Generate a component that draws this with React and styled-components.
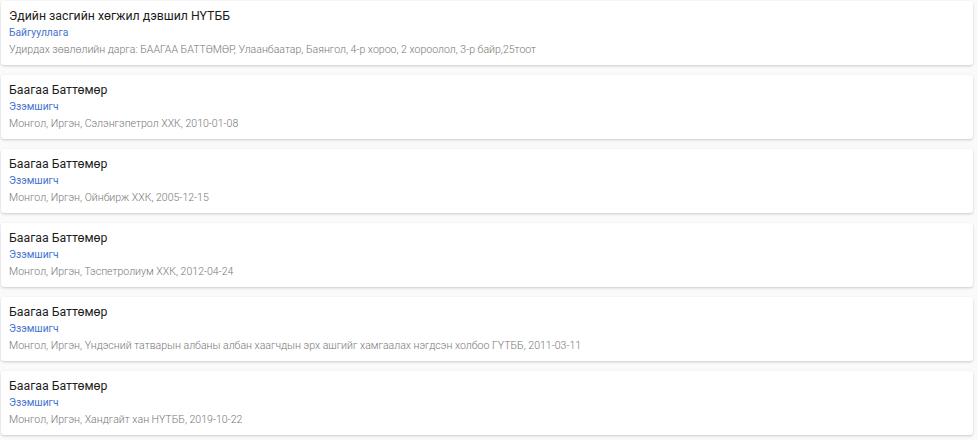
import React from 'react';
import styled, { createGlobalStyle } from 'styled-components';

const GlobalStyle = createGlobalStyle`
  body {
    margin: 0;
    background: #fafafa;
    font-family: Roboto, "Liberation Sans", sans-serif;
  }
`;

const List = styled.div`
  display: flex;
  flex-direction: column;
  gap: 10px;
  padding: 1px 5px 4px 1px;
`;

const Card = styled.div`
  background: #fff;
  border-radius: 3px;
  box-shadow: 0 1px 3px rgba(0, 0, 0, 0.12), 0 1px 2px rgba(0, 0, 0, 0.08);
  padding: 7px 8px 9px;
  display: flex;
  flex-direction: column;
  height: 64px;
  box-sizing: border-box;
`;

const Title = styled.div`
  font-size: 12.3px;
  font-weight: 400;
  color: #1c1c1c;
  line-height: 16px;
`;

const Role = styled.div`
  font-size: 10.3px;
  color: #4472cf;
  line-height: 15px;
  margin-top: 1px;
`;

const Detail = styled.div`
  font-size: 10.55px;
  font-weight: 300;
  color: #777;
  line-height: 15px;
  margin-top: 2px;
`;

const items = [
  {
    title: 'Эдийн засгийн хөгжил дэвшил НҮТББ',
    role: 'Байгууллага',
    detail: 'Удирдах зөвлөлийн дарга: БААГАА БАТТӨМӨР, Улаанбаатар, Баянгол, 4-р хороо, 2 хороолол, 3-р байр,25тоот',
  },
  { title: 'Баагаа Баттөмөр', role: 'Эзэмшигч', detail: 'Монгол, Иргэн, Сэлэнгэпетрол ХХК, 2010-01-08' },
  { title: 'Баагаа Баттөмөр', role: 'Эзэмшигч', detail: 'Монгол, Иргэн, Ойнбирж ХХК, 2005-12-15' },
  { title: 'Баагаа Баттөмөр', role: 'Эзэмшигч', detail: 'Монгол, Иргэн, Тэспетролиум ХХК, 2012-04-24' },
  {
    title: 'Баагаа Баттөмөр',
    role: 'Эзэмшигч',
    detail: 'Монгол, Иргэн, Үндэсний татварын албаны албан хаагчдын эрх ашгийг хамгаалах нэгдсэн холбоо ГҮТББ, 2011-03-11',
  },
  { title: 'Баагаа Баттөмөр', role: 'Эзэмшигч', detail: 'Монгол, Иргэн, Хандгайт хан НҮТББ, 2019-10-22' },
];

const App = () => (
  <>
    <GlobalStyle />
    <List>
      {items.map((item, i) => (
        <Card key={i}>
          <Title>{item.title}</Title>
          <Role>{item.role}</Role>
          <Detail>{item.detail}</Detail>
        </Card>
      ))}
    </List>
  </>
);

export default App;
